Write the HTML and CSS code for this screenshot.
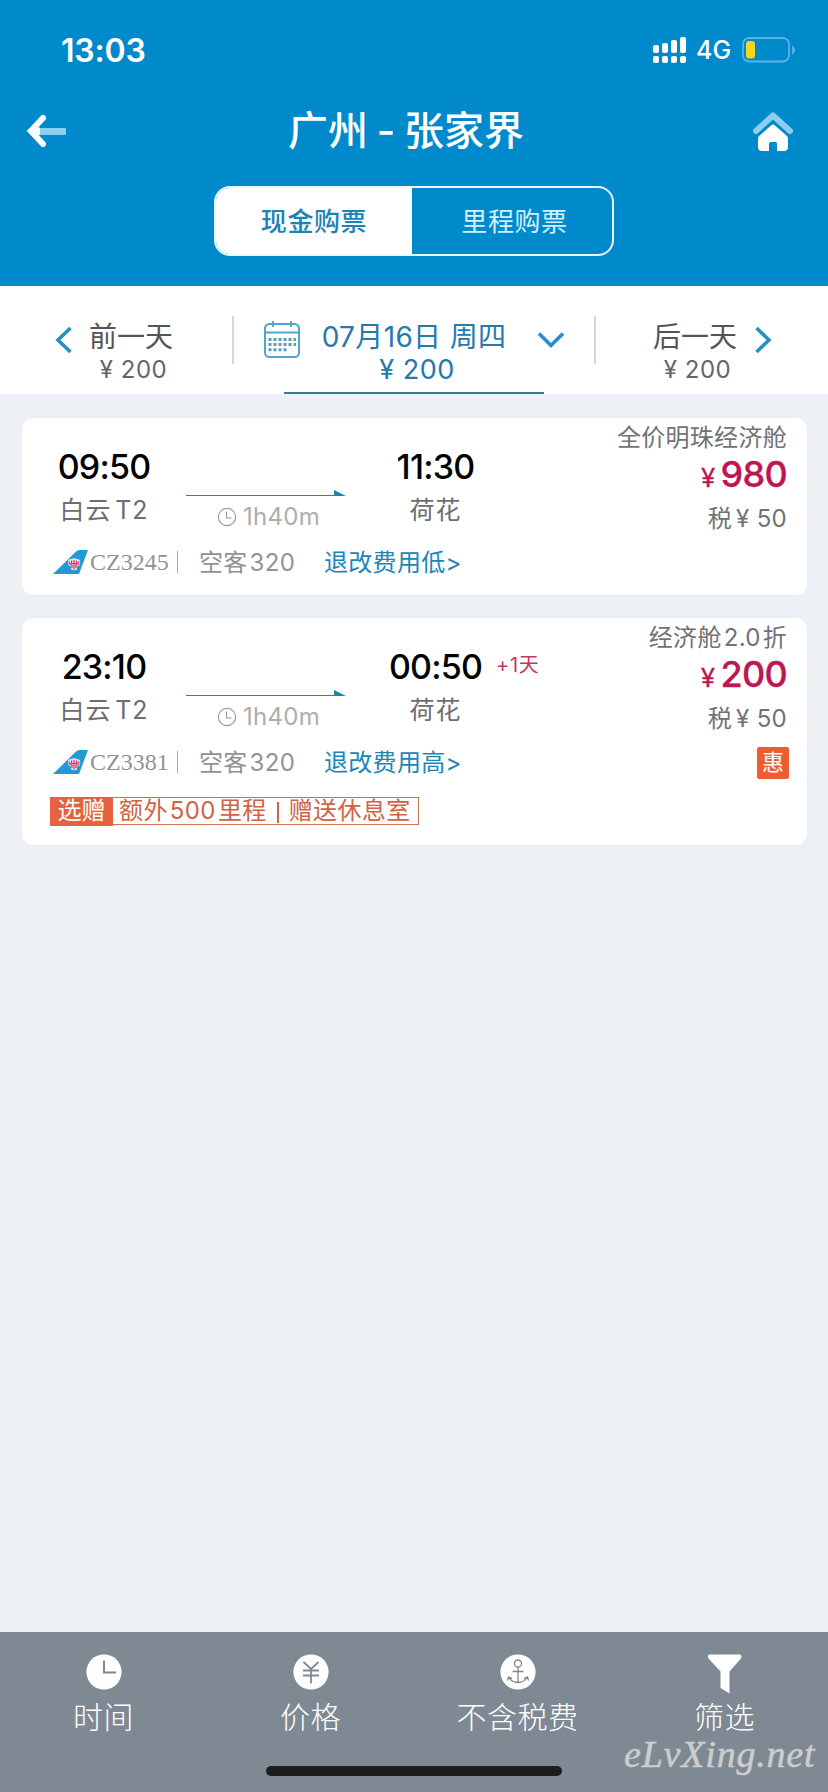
FILE: index.html
```html
<!DOCTYPE html>
<html lang="zh-CN">
<head>
<meta charset="utf-8">
<title>广州 - 张家界</title>
<link rel="stylesheet" href="styles.css">
</head>
<body>
<svg class="defs" width="0" height="0" aria-hidden="true">
  <symbol id="tail" viewBox="0 0 36 24">
    <path d="M0 24 L23 1.500 Q24.500 0 26.500 0 H35 L26 24 Z" fill="#209bd5"/>
    <path d="M15 13 q-1-4 3-4 q3-1.500 6 0 q4 0 3 4 q0 3-3 3.500 v3 q-3 1.500-6 0 v-3 q-3-.5-3-3.500z" fill="#e3dfea"/>
    <path d="M21 19.500 V10 M19 18 V15 Q16 14.500 16 11.500 M23 18 V15 Q26 14.500 26 11.500 M18.500 10.500 V13.500 H23.500 V10.500" fill="none" stroke="#d04060" stroke-width="1.200"/>
  </symbol>
  <symbol id="arrow" viewBox="0 0 160 7">
    <path d="M0 5.500 H158" stroke="#2283ad" stroke-width="1.200"/>
    <path d="M148 0 L160 6 H148 Z" fill="#2283ad"/>
  </symbol>
  <symbol id="clock" viewBox="0 0 20 20">
    <circle cx="10" cy="10" r="8.600" fill="none" stroke="#999" stroke-width="1.100"/>
    <path d="M9.500 4.500 V11 H14.500" fill="none" stroke="#999" stroke-width="1.100"/>
  </symbol>
</svg>

<header class="header">
  <div class="status">
    <span class="status-time">13:03</span>
    <div class="status-icons">
      <svg width="34" height="27" viewBox="0 0 34 27" fill="#fff">
        <rect x="0" y="8" width="6" height="8" rx="2"/><rect x="9" y="6" width="6" height="10" rx="2"/><rect x="18" y="3" width="6" height="13" rx="2"/><rect x="27" y="0" width="6" height="16" rx="2"/>
        <rect x="0" y="19" width="6" height="7" rx="2"/><rect x="9" y="19" width="6" height="7" rx="2"/><rect x="18" y="19" width="6" height="7" rx="2"/><rect x="27" y="19" width="6" height="7" rx="2"/>
      </svg>
      <span class="network">4G</span>
      <svg width="54" height="26" viewBox="0 0 54 26">
        <rect x="1" y="1" width="46" height="23.500" rx="6" fill="none" stroke="#55b4e4" stroke-width="1.800"/>
        <rect x="4" y="4" width="9" height="17.500" rx="3" fill="#f8d51f"/>
        <path d="M50 8.500 Q53 10 53 13 Q53 16 50 17.500 Z" fill="#55b4e4"/>
      </svg>
    </div>
  </div>
  <div class="nav">
    <svg width="42" height="36" viewBox="0 0 42 36">
      <rect x="13" y="15" width="27" height="7" rx="1" fill="#8dcdef"/>
      <path d="M17 5 L5 18 L17 31" fill="none" stroke="#fff" stroke-width="6" stroke-linecap="round" stroke-linejoin="miter"/>
      <path d="M1 18 L8 10.500 L14 15 V21.500 L8 25.500 Z" fill="#fff"/>
    </svg>
    <h1 class="title">广州 - 张家界</h1>
    <svg width="40" height="40" viewBox="0 0 40 40">
      <path d="M3 20 L20 4.500 L37 20" fill="none" stroke="#8dcdef" stroke-width="6" stroke-linecap="round" stroke-linejoin="round"/>
      <path d="M20 13.500 Q21 13.500 22 14.500 L34 25 Q35 26 35 27.500 V36 Q35 40 31 40 H24 V32.500 Q24 31 22.500 31 H17.500 Q16 31 16 32.500 V40 H9 Q5 40 5 36 V27.500 Q5 26 6 25 L18 14.500 Q19 13.500 20 13.500Z" fill="#fff"/>
    </svg>
  </div>
  <div class="tabs">
    <span class="tab tab-active">现金购票</span>
    <span class="tab">里程购票</span>
  </div>
</header>

<section class="dates">
  <div class="day day-prev">
    <svg class="chev" width="18" height="28" viewBox="0 0 18 28"><path d="M15.500 2 L3 14 L15.500 26" fill="none" stroke="#2490c8" stroke-width="3.600"/></svg>
    <div class="day-text"><span class="day-name">前一天</span><span class="day-price">¥ 200</span></div>
  </div>
  <div class="day day-current">
    <svg class="calendar" width="36" height="37" viewBox="0 0 36 37" fill="none" stroke="#4fa5cd">
      <rect x="1" y="3" width="34" height="33" rx="4.500" stroke-width="2"/>
      <path d="M1 11.500 H35 M9 0 V6 M27 0 V6" stroke-width="1.800"/>
      <path d="M4.500 18.500 H32 M4.500 23.500 H32 M4.500 28.800 H22.500" stroke="#5b9dbd" stroke-width="3" stroke-dasharray="3 2"/>
    </svg>
    <div class="day-text"><span class="day-name">07月16日 周四</span><span class="day-price">¥ 200</span></div>
    <svg class="chev-down" width="28" height="18" viewBox="0 0 28 18"><path d="M2 2.500 L14 14.500 L26 2.500" fill="none" stroke="#2490c8" stroke-width="3.600"/></svg>
  </div>
  <div class="day day-next">
    <div class="day-text"><span class="day-name">后一天</span><span class="day-price">¥ 200</span></div>
    <svg class="chev" width="18" height="28" viewBox="0 0 18 28"><path d="M2.500 2 L15 14 L2.500 26" fill="none" stroke="#2490c8" stroke-width="3.600"/></svg>
  </div>
</section>

<main class="list">
  <article class="card">
    <div class="info">
      <div class="route">
        <div class="stop"><span class="time">09:50</span><span class="place">白云<i class="thin"></i>T2</span></div>
        <div class="leg"><svg width="160" height="7"><use href="#arrow"/></svg><div class="duration"><svg width="20" height="20"><use href="#clock"/></svg>1h40m</div></div>
        <div class="stop stop-arrive"><span class="time">11:30</span><span class="place">荷花</span></div>
      </div>
      <div class="meta"><svg width="36" height="24"><use href="#tail"/></svg><span class="flight">CZ3245</span><span class="bar"></span><span class="plane">空客<i class="thin"></i>320</span><a class="rule">退改费用低&gt;</a></div>
    </div>
    <div class="fare"><span class="cabin">全价明珠经济舱</span><span class="price"><small class="yen">¥</small>980</span><span class="tax">税<i class="thin"></i>¥ 50</span></div>
  </article>

  <article class="card">
    <div class="info">
      <div class="route">
        <div class="stop"><span class="time">23:10</span><span class="place">白云<i class="thin"></i>T2</span></div>
        <div class="leg"><svg width="160" height="7"><use href="#arrow"/></svg><div class="duration"><svg width="20" height="20"><use href="#clock"/></svg>1h40m</div></div>
        <div class="stop stop-arrive"><span class="time">00:50</span><span class="place">荷花</span><span class="plus-day">+1天</span></div>
      </div>
      <div class="meta"><svg width="36" height="24"><use href="#tail"/></svg><span class="flight">CZ3381</span><span class="bar"></span><span class="plane">空客<i class="thin"></i>320</span><a class="rule">退改费用高&gt;</a></div>
      <div class="promo"><span class="promo-tag">选赠</span><span class="promo-text">额外<i class="thin"></i>500<i class="thin"></i>里程<b class="promo-bar"></b>赠送休息室</span></div>
    </div>
    <div class="fare"><span class="cabin">经济舱<i class="thin"></i>2.0<i class="thin"></i>折</span><span class="price"><small class="yen">¥</small>200</span><span class="tax">税<i class="thin"></i>¥ 50</span><span class="deal">惠</span></div>
  </article>
</main>

<footer class="footer">
  <div class="tool"><svg width="36" height="40" viewBox="0 0 36 40"><circle cx="18" cy="18" r="17.600" fill="#fff"/><path d="M18 6.500 V18.500 H30" fill="none" stroke="#7e8994" stroke-width="2"/></svg><span>时间</span></div>
  <div class="tool"><svg width="36" height="40" viewBox="0 0 36 40"><circle cx="18" cy="18" r="17.600" fill="#fff"/><path d="M10.500 8 L18 15 L25.500 8 M18 15 V29.500 M10 16.500 H26 M10 21.500 H26" fill="none" stroke="#7e8994" stroke-width="1.800"/></svg><span>价格</span></div>
  <div class="tool"><svg width="36" height="40" viewBox="0 0 36 40"><circle cx="18" cy="18" r="17.600" fill="#fff"/><g fill="none" stroke="#7e8994" stroke-width="1.300"><circle cx="18" cy="9.500" r="3.500"/><path d="M18 13 V28.500 M12.500 17.500 H23.500 M8.500 23 Q12 28.500 18 28.500 Q24 28.500 27.500 23 M7.500 26.500 L8.500 23 L12 24.500 M28.500 26.500 L27.500 23 L24 24.500"/></g></svg><span>不含税费</span></div>
  <div class="tool"><svg width="36" height="40" viewBox="0 0 36 40"><path d="M2 0.500 H33 Q34.500 0.500 34.500 3 Q34.500 4 33.500 5 L22.500 17.500 V39.500 L13.500 34 V17.500 L2 5 Q1 4 1 3 Q1 0.500 2 0.500Z" fill="#fff"/></svg><span>筛选</span></div>
  <div class="home-bar"></div>
  <div class="watermark">eLvXing.net</div>
</footer>
</body>
</html>
```

FILE: styles.css
```css
* { box-sizing: border-box; }

body {
  margin: 0;
  width: 828px;
  height: 1792px;
  display: flex;
  flex-direction: column;
  overflow: hidden;
  background: #edf1f5;
  font-family: Inter, "Noto Sans CJK SC", sans-serif;
  color: #666;
}

svg { display: block; flex: none; }
.defs { position: absolute; }
.thin { display: inline-block; width: 2px; }

/* Header */
.header { height: 286px; flex: none; background: #008acc; color: #fff; }
.status { height: 98px; padding: 2px 32px 0 61px; display: flex; align-items: center; justify-content: space-between; }
.status-time { font-size: 32px; font-weight: 600; letter-spacing: -0.2px; }
.status-icons { display: flex; align-items: center; }
.network { width: 55px; padding-left: 9px; font-size: 25px; font-weight: 500; }
.nav { height: 66px; padding: 0 35px 0 26px; display: flex; align-items: center; justify-content: space-between; }
.title { margin: 0 9px 1px 0; font-size: 40px; line-height: 60px; font-weight: 500; word-spacing: -2px; }
.tabs { width: 400px; height: 70px; margin: 22px 0 0 214px; border: 2px solid #e6f9ff; border-radius: 16px; display: flex; overflow: hidden; }
.tab { flex: 1; padding: 1px 0 0 5px; line-height: 66px; text-align: center; font-size: 26px; letter-spacing: 0.6px; color: #d2f1fc; }
.tab-active { flex: none; width: 196px; padding-left: 0; background: #fff; color: #1d83b5; font-weight: 500; }

/* Date switcher */
.dates { height: 108px; flex: none; display: flex; background: #fff; }
.day { position: relative; display: flex; padding-top: 34px; }
.day-text { display: flex; flex-direction: column; align-items: center; }
.day-name { font-size: 28px; line-height: 34px; color: #555; white-space: nowrap; }
.day-price { font-size: 24px; line-height: 32px; letter-spacing: 0.5px; padding-left: 5px; color: #666; }
.day-prev { width: 232px; padding-left: 55px; }
.day-prev .day-text { margin-left: 16px; }
.chev { margin-top: 6px; }
.day-current { width: 364px; padding-left: 32px; }
.day-current::before, .day-current::after { content: ""; position: absolute; top: 30px; width: 2px; height: 48px; background: #d2d6d9; }
.day-current::before { left: 0; }
.day-current::after { right: 0; }
.calendar { margin-top: 1px; }
.day-current .day-text { width: 260px; margin-left: -16px; height: 74px; border-bottom: 2px solid #3478a5; }
.day-current .day-name { color: #2678ad; letter-spacing: 0.35px; }
.day-current .day-price { color: #2678ad; font-size: 27px; padding-left: 6px; }
.chev-down { margin: 11px 0 0 -7px; }
.day-next { padding-left: 57px; }
.day-next .chev { margin-left: 17px; }

/* Flight cards */
.list { flex: 1; padding: 24px 21px 0 22px; display: flex; flex-direction: column; gap: 23px; }
.card { display: flex; justify-content: space-between; background: #fff; border-radius: 11px; box-shadow: 0 0 2px #e2e7e9; }
.info { width: 520px; padding: 29px 0 17px; }
.route { display: flex; height: 95px; }
.stop { width: 164px; display: flex; flex-direction: column; align-items: center; position: relative; }
.stop-arrive { width: 179px; }
.time { font-size: 34px; line-height: 40px; font-weight: 500; letter-spacing: -0.8px; color: #000; }
.place { margin-top: 3px; font-size: 25px; line-height: 40px; letter-spacing: 0.9px; color: #6d6d72; }
.place .thin { width: 4px; }
.leg { width: 160px; padding-top: 43px; }
.duration { margin: 4px 0 0 31px; display: flex; align-items: center; gap: 6px; font-size: 24px; line-height: 32px; letter-spacing: 0.3px; color: #adadad; }
.plus-day { position: absolute; left: 150px; top: 1px; font-size: 20px; line-height: 34px; letter-spacing: 0.7px; color: #c43566; white-space: nowrap; }
.meta { height: 36px; padding: 1px 0 0 31px; display: flex; align-items: center; font-size: 24px; color: #929292; }
.meta svg { margin-top: 2px; }
.flight { width: 88px; padding: 3px 0 0 1px; font-family: "Liberation Serif", serif; font-size: 24px; }
.bar { width: 1px; height: 22px; margin-top: 3px; background: #aaa; }
.plane { width: 125px; margin-left: 21px; letter-spacing: 0.3px; }
.rule { color: #1c85b7; letter-spacing: 0.3px; white-space: nowrap; }
.fare { width: 240px; padding: 2px 20px 0 0; display: flex; flex-direction: column; align-items: flex-end; white-space: nowrap; }
.cabin { font-size: 24px; line-height: 36px; letter-spacing: 0.3px; color: #707276; }
.price { font-size: 36px; line-height: 36px; font-weight: 500; letter-spacing: -0.7px; color: #bd1650; -webkit-text-stroke: 0.3px #bd1650; }
.yen { font-size: 26px; font-weight: 400; margin-right: 6px; }
.tax { margin-top: 5px; font-size: 24px; line-height: 36px; letter-spacing: 0.3px; color: #707276; }
.tax .thin { width: 4px; }
.deal { width: 32px; height: 32px; margin: 10px -2px 0 0; border-radius: 2px; background: #ee5c30; color: #fff; font-size: 22px; line-height: 31px; text-align: center; }
.promo { width: 369px; height: 29px; margin: 19px 0 2px 28px; display: flex; font-size: 24px; line-height: 28px; }
.promo-tag { width: 63px; background: #e4623d; color: #fff; text-align: center; }
.promo-text { flex: 1; height: 28px; border: 1px solid #d0714f; border-left: 0; padding-left: 6px; line-height: 26px; letter-spacing: 0.4px; color: #cf6444; white-space: nowrap; }
.promo-bar { display: inline-block; width: 2px; height: 21px; margin: 0 10px; vertical-align: -4px; background: #cf6444; }

/* Bottom toolbar */
.footer { position: relative; flex: none; height: 160px; padding-top: 22px; display: flex; background: #7e8994; color: #fff; }
.tool { width: 207px; display: flex; flex-direction: column; align-items: center; font-size: 30px; line-height: 46px; letter-spacing: 0.5px; font-weight: 300; }
.home-bar { position: absolute; left: 266px; top: 134px; width: 296px; height: 10px; border-radius: 5px; background: #1d1d1d; }
.watermark { position: absolute; left: 624px; top: 99px; font-family: "Liberation Serif", serif; font-style: italic; font-size: 38px; line-height: 46px; letter-spacing: 0.8px; color: #cdcdcd; -webkit-text-stroke: 0.5px #cdcdcd; }
```
